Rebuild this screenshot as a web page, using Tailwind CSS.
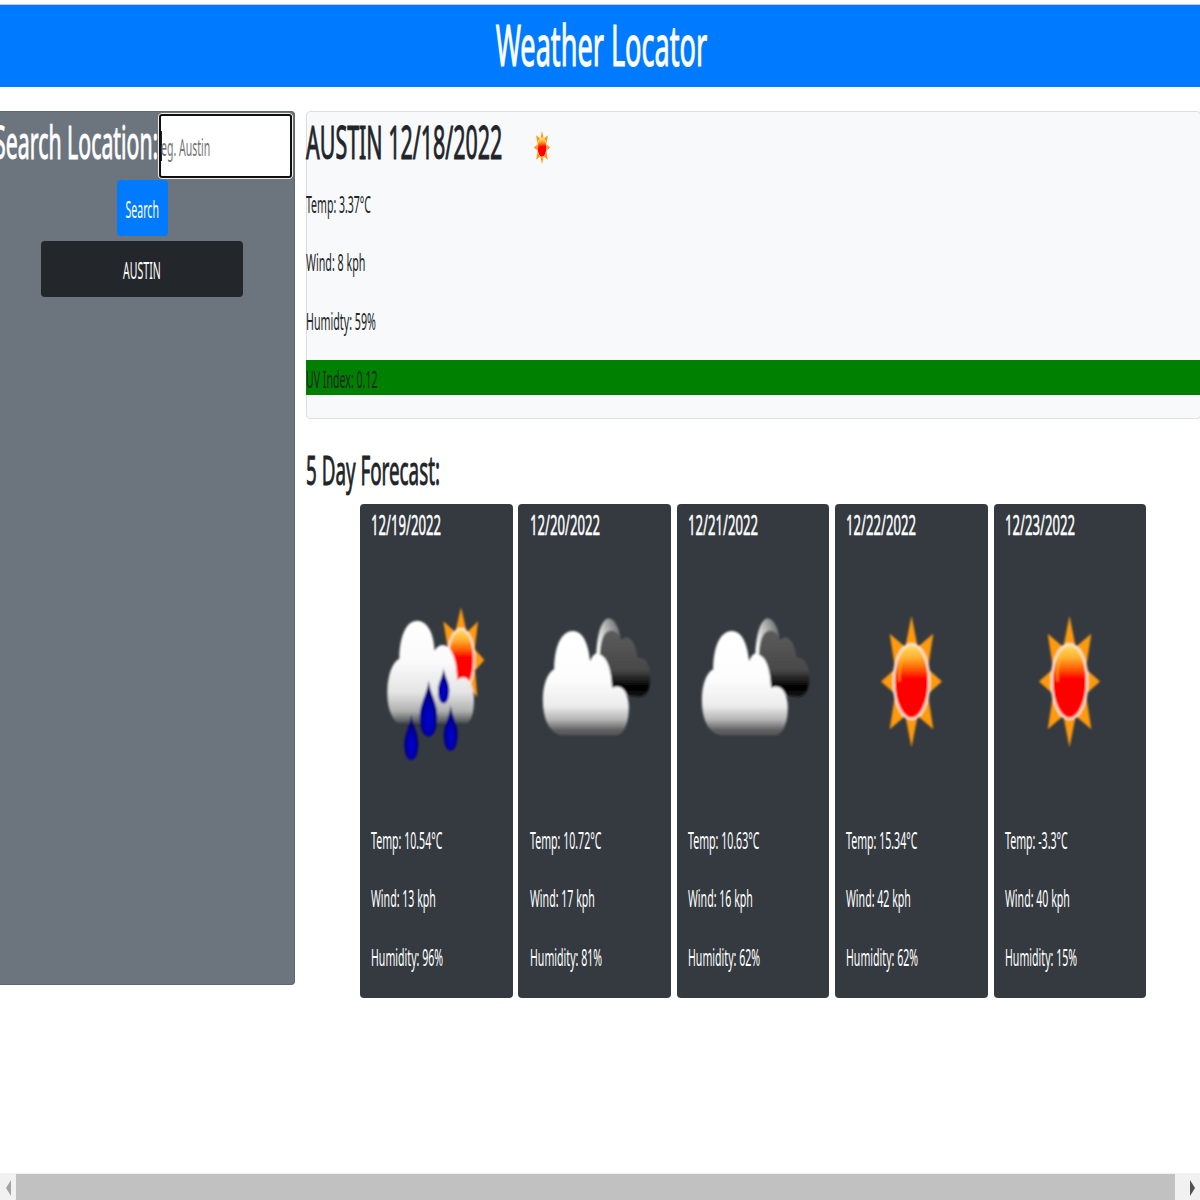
<!DOCTYPE html>
<html lang="en">
<head>
<meta charset="utf-8">
<title>Weather Locator</title>
<script src="https://cdn.jsdelivr.net/npm/@tailwindcss/browser@4"></script>
</head>
<body class="h-[1200px] w-[1200px] overflow-hidden bg-white font-['Noto_Sans',sans-serif] text-[#212529]">
<svg class="absolute size-0">
  <defs>
    <linearGradient id="core" x1="0" y1="0" x2="0" y2="1"><stop offset="0" stop-color="#ffe070"/><stop offset=".18" stop-color="#ffb030"/><stop offset=".34" stop-color="#ff5a00"/><stop offset=".46" stop-color="#ff0000"/><stop offset="1" stop-color="#ff0000"/></linearGradient>
    <linearGradient id="cloud" x1="0" y1="0" x2="0" y2="1"><stop offset="0" stop-color="#fff"/><stop offset=".45" stop-color="#fdfdfd"/><stop offset=".72" stop-color="#ececec"/><stop offset=".85" stop-color="#b4b4b4"/><stop offset=".95" stop-color="#606060"/><stop offset="1" stop-color="#555"/></linearGradient>
    <linearGradient id="rain" x1="0" y1="0" x2="0" y2="1"><stop offset="0" stop-color="#fff"/><stop offset=".4" stop-color="#fafafa"/><stop offset=".7" stop-color="#e4e4e4"/><stop offset=".88" stop-color="#b0b0b0"/><stop offset="1" stop-color="#4a4d50"/></linearGradient>
    <linearGradient id="dark" x1="0" y1="0" x2="0" y2="1"><stop offset="0" stop-color="#5c5c5c"/><stop offset=".6" stop-color="#484848"/><stop offset=".85" stop-color="#000"/><stop offset="1" stop-color="#111"/></linearGradient>
    <linearGradient id="rim" x1="0" y1=".6" x2=".9" y2="0"><stop offset="0" stop-color="#fff"/><stop offset=".5" stop-color="#b8b8b8"/><stop offset="1" stop-color="#606366"/></linearGradient>
    <radialGradient id="drop" cx=".5" cy=".68" r=".5"><stop offset="0" stop-color="#0000d8"/><stop offset=".5" stop-color="#0000b0"/><stop offset="1" stop-color="#000070"/></radialGradient>
    <filter id="soft" x="-10%" y="-10%" width="120%" height="120%"><feGaussianBlur stdDeviation="3"/></filter>
    <symbol id="sun" viewBox="0 0 200 410" preserveAspectRatio="none">
      <g filter="url(#soft)">
        <path fill="#ff9a10" d="M100 8L119 105L81 105ZM100 402L81 305L119 305ZM9 205L50 168L50 242ZM191 205L150 168L150 242ZM35 62L85 105L50 160ZM165 62L115 105L150 160ZM35 348L85 305L50 250ZM165 348L115 305L150 250Z"/>
        <ellipse cx="100" cy="205" rx="53" ry="112" fill="url(#core)" stroke="#ffe9d2" stroke-width="7"/>
        <path d="M64 205Q60 135 88 120" fill="none" stroke="#ffc020" stroke-width="7" opacity=".6"/>
      </g>
    </symbol>
    <symbol id="clouds" viewBox="0 0 459 600">
      <g transform="translate(4.5 30)" filter="url(#soft)">
        <path fill="url(#rim)" d="M230 215C230 150 240 94 266 85C284 87 296 106 302 140L270 200Z"/>
        <path fill="url(#dark)" d="M240 220C240 160 250 124 272 122C290 120 300 134 306 150C328 126 350 160 354 204C378 200 394 228 392 262C391 296 384 318 362 320L285 312Z"/>
        <path fill="url(#cloud)" d="M122 436C88 424 70 388 70 328C71 282 84 248 104 238C105 170 124 124 160 123C192 124 207 164 212 214C220 192 230 186 242 194C266 204 276 246 278 294C306 278 327 308 328 350C328 396 316 426 296 436Z"/>
      </g>
    </symbol>
    <symbol id="showers" viewBox="0 0 459 600">
      <g filter="url(#soft)">
        <path fill="#ff9a10" d="M303 82L321 160L285 160ZM250 124L290 160L264 210ZM354 124L318 160L344 210ZM373 240L338 200L338 280ZM352 352L312 300L345 266Z"/>
        <ellipse cx="303" cy="240" rx="40" ry="94" fill="url(#core)" stroke="#ffe9d2" stroke-width="6"/>
        <path fill="url(#rain)" d="M112 430C90 408 81 376 82 330C84 280 98 246 118 236C119 165 140 122 172 122C204 124 221 160 224 212C240 186 264 192 276 218C288 242 290 270 292 300C318 276 341 308 342 356C342 396 336 418 322 430Z"/>
        <g fill="url(#drop)">
          <path d="M206 302C212 346 232 366 232 412C231 448 221 470 206 470C190 470 179 448 179 412C180 368 200 346 206 302Z"/>
          <path d="M251 265C255 294 268 306 268 332C267 356 261 370 251 370C241 370 234 356 234 332C235 306 247 294 251 265Z"/>
          <path d="M154 402C159 440 175 456 175 492C174 524 167 540 154 540C141 540 133 522 133 492C134 458 150 440 154 402Z"/>
          <path d="M272 376C277 414 293 430 293 464C292 496 284 512 272 512C259 512 251 494 251 464C252 432 268 414 272 376Z"/>
        </g>
      </g>
    </symbol>
  </defs>
</svg>

<div class="flex h-full flex-col">
  <header class="mt-[4px] flex h-[83.4px] shrink-0 items-start justify-center border-t-[1.5px] border-[#c8c8c8] bg-[#007bff] text-white">
    <h1 class="translate-x-[1px] translate-y-[3.5px] scale-x-[.484] text-[56px] leading-[70px] whitespace-nowrap [-webkit-text-stroke:1.1px]">Weather Locator</h1>
  </header>

  <main class="mt-[23.6px] flex min-h-0 flex-1">
    <aside class="flex h-[874.5px] w-[295px] shrink-0 flex-col items-center overflow-hidden rounded-r-[4px] border-y border-r border-[#5f676e] bg-[#6c757d] text-white">
      <div class="flex h-[67.5px] w-full justify-end pr-[1px]">
        <h2 class="origin-right translate-x-[1px] translate-y-[2px] scale-x-[.477] text-[44.7px] leading-[56px] whitespace-nowrap [-webkit-text-stroke:1px]">Search Location:</h2>
        <div class="mt-[1px] h-[66px] w-[135.5px] shrink-0 rounded-[4px] border-[1.4px] border-[#eeeeee] bg-white">
          <div class="flex h-full items-center rounded-[3px] border-2 border-[#101010]">
            <div class="h-[30px] w-px shrink-0 bg-[#222]"></div>
            <span class="-ml-px origin-left translate-y-[2px] scale-x-[.46] text-[22.9px] leading-[35px] whitespace-nowrap text-[#757575]">eg. Austin</span>
          </div>
        </div>
      </div>
      <div class="mt-[1px] mr-[10px] flex h-[55.5px] w-[51px] items-center justify-center rounded-[4px] bg-[#007bff]"><span class="translate-y-[0.5px] scale-x-[.46] text-[22.9px] leading-[35px]">Search</span></div>
      <div class="mt-[5.5px] mr-[10px] flex h-[55.5px] w-[202.5px] items-center justify-center rounded-[4px] bg-[#23272b]"><span class="translate-y-[0.5px] scale-x-[.46] text-[22.9px] leading-[35px]">AUSTIN</span></div>
    </aside>

    <div class="ml-[10.5px] flex w-[895.5px] shrink-0 flex-col">
      <section class="h-[308.5px] shrink-0 rounded-[4px] border border-[#dcdee0] bg-[#f8f9fa] text-[22.9px] leading-[35px]">
        <div class="relative h-[73px]">
          <h2 class="-ml-px inline-block origin-left translate-y-[2px] scale-x-[.48] text-[44.7px] leading-[56px] whitespace-nowrap [-webkit-text-stroke:1px]">AUSTIN 12/18/2022</h2>
          <svg class="absolute top-[18px] left-[226px] h-[35px] w-[18px]"><use href="#sun"/></svg>
        </div>
        <p class="-ml-px mb-[23.3px]"><span class="inline-block origin-left translate-y-[1.5px] scale-x-[.46] whitespace-nowrap">Temp: 3.37°C</span></p>
        <p class="-ml-px mb-[23.3px]"><span class="inline-block origin-left translate-y-[1.5px] scale-x-[.467] whitespace-nowrap">Wind: 8 kph</span></p>
        <p class="-ml-px mb-[23.3px]"><span class="inline-block origin-left translate-y-[1.5px] scale-x-[.467] whitespace-nowrap">Humidty: 59%</span></p>
        <p class="-mx-px bg-[#008000]"><span class="inline-block origin-left translate-y-[1.5px] scale-x-[.463] whitespace-nowrap">UV Index: 0.12</span></p>
      </section>
      <h3 class="mt-[28px] h-[56.5px] origin-left -translate-y-[2px] scale-x-[.48] self-start text-[39.2px] leading-[49px] whitespace-nowrap [-webkit-text-stroke:0.9px]">5 Day Forecast:</h3>
      <div id="forecast" class="ml-[54.5px] flex gap-[5.8px]"></div>
    </div>
  </main>

  <footer class="flex h-[27.5px] shrink-0 items-stretch bg-[#f1f1f1]">
    <div class="flex w-[16px] items-center justify-center"><svg class="mt-[4px] h-[16px] w-[5px]" viewBox="0 0 5 16" preserveAspectRatio="none"><path fill="#a3a3a3" d="M5 0V16L0 8Z"/></svg></div>
    <div class="mt-[1px] w-[1158.5px] bg-[#c1c1c1]"></div>
    <div class="flex flex-1 items-center justify-center"><svg class="mt-[4px] ml-[11px] h-[16px] w-[5px]" viewBox="0 0 5 16" preserveAspectRatio="none"><path fill="#505050" d="M0 0V16L5 8Z"/></svg></div>
  </footer>
</div>

<script>
const sun = '<svg class="mx-auto h-[137px] w-[67px]"><use href="#sun"/></svg>';
const icon = id => `<svg class="-mt-[33px] h-[200px] w-[153px]"><use href="#${id}"/></svg>`;
const days = [
  ['12/19/2022', icon('showers'), 'Temp: 10.54°C', 'Wind: 13 kph', 'Humidity: 96%'],
  ['12/20/2022', icon('clouds'), 'Temp: 10.72°C', 'Wind: 17 kph', 'Humidity: 81%'],
  ['12/21/2022', icon('clouds'), 'Temp: 10.63°C', 'Wind: 16 kph', 'Humidity: 62%'],
  ['12/22/2022', sun, 'Temp: 15.34°C', 'Wind: 42 kph', 'Humidity: 62%'],
  ['12/23/2022', sun, 'Temp: -3.3°C', 'Wind: 40 kph', 'Humidity: 15%'],
];
const line = t => `<p class="mb-[23.3px] ml-[11.2px] text-[22.9px] leading-[35px]"><span class="inline-block origin-left translate-y-px scale-x-[.463] whitespace-nowrap">${t}</span></p>`;
document.getElementById('forecast').innerHTML = days.map(([date, art, ...rows]) => `
  <article class="h-[494.5px] w-[152.6px] shrink-0 overflow-hidden rounded-[4px] bg-[#343a40] text-white">
    <h5 class="ml-[11.2px] h-[76px] text-[28px] leading-[35px]"><span class="inline-block origin-left translate-y-[2.5px] scale-x-[.47] whitespace-nowrap [-webkit-text-stroke:0.6px]">${date}</span></h5>
    <div class="h-[242px] pt-[33px]">${art}</div>
    ${rows.map(line).join('')}
  </article>`).join('');
</script>
</body>
</html>
